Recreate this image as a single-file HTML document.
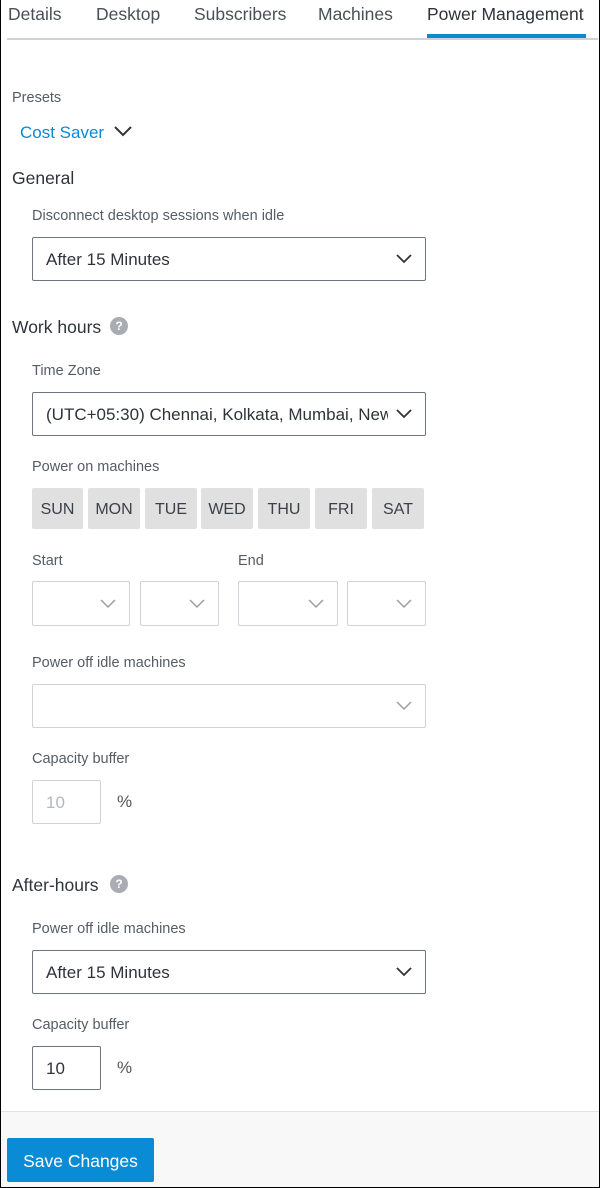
<!DOCTYPE html>
<html><head><meta charset="utf-8"><style>
*{box-sizing:border-box;margin:0;padding:0}
body{width:600px;height:1188px;position:relative;background:#fff;font-family:"Liberation Sans",sans-serif;color:#333;overflow:hidden}
.a{position:absolute;white-space:nowrap}
.frame{position:absolute;left:0;top:0;width:600px;height:1188px;border:1px solid #000;border-top:none;pointer-events:none}
.tab{position:absolute;top:4px;font-size:17.5px;color:#4a4f57;white-space:nowrap}
.lbl{font-size:14.5px;color:#555c66}
.h{font-size:17.5px;color:#2f333a}
.sel{position:absolute;border:1px solid #6f7580;border-radius:2px;background:#fff;font-size:17px;color:#2f333a;padding-left:13px;display:flex;align-items:center;white-space:nowrap}
.sel.l{border-color:#cfd2d6}
.chev{position:absolute;right:13px;top:50%;margin-top:-5px}
.day{position:absolute;top:488px;height:41px;background:#e0e0e0;border-radius:2px;font-size:16px;color:#3b4048;display:flex;align-items:center;justify-content:center;padding-top:2px}
.q{position:absolute;width:18px;height:18px;border-radius:50%;background:#a9adb3;color:#fff;font-size:12px;font-weight:bold;text-align:center;line-height:18px}
</style></head><body>
<div class="tab" style="left:8px">Details</div>
<div class="tab" style="left:96px">Desktop</div>
<div class="tab" style="left:194px">Subscribers</div>
<div class="tab" style="left:318px">Machines</div>
<div class="tab" style="left:427px;color:#2f333a">Power Management</div>
<div class="a" style="left:7px;top:38px;width:591px;height:2px;background:#d0d2d5"></div>
<div class="a" style="left:427px;top:34px;width:159px;height:4px;background:#0a8ad0"></div>

<div class="a lbl" style="left:12px;top:90px">Presets</div>
<div class="a" style="left:20px;top:123px;font-size:17px;color:#0a8ad0">Cost Saver</div>
<svg class="a" style="left:114px;top:126px" width="18" height="11"><path d="M1 1 L9 9 L17 1" stroke="#333" stroke-width="2" fill="none"/></svg>

<div class="a h" style="left:12px;top:168px">General</div>
<div class="a lbl" style="left:32px;top:208px">Disconnect desktop sessions when idle</div>
<div class="sel" style="left:32px;top:237px;width:394px;height:44px;padding-top:2px">After 15 Minutes<svg class="chev" width="16" height="10"><path d="M1 1 L8 8 L15 1" stroke="#333" stroke-width="1.8" fill="none"/></svg></div>

<div class="a h" style="left:12px;top:317px">Work hours</div>
<div class="q" style="left:110px;top:317px">?</div>
<div class="a lbl" style="left:32px;top:363px">Time Zone</div>
<div class="sel" style="left:32px;top:392px;width:394px;height:44px;overflow:hidden;padding-top:2px"><span style="width:342px;overflow:hidden;display:block">(UTC+05:30) Chennai, Kolkata, Mumbai, New Delhi</span><svg class="chev" width="16" height="10"><path d="M1 1 L8 8 L15 1" stroke="#333" stroke-width="1.8" fill="none"/></svg></div>

<div class="a lbl" style="left:32px;top:459px">Power on machines</div>
<div class="day" style="left:32px;width:51px">SUN</div>
<div class="day" style="left:88px;width:52px">MON</div>
<div class="day" style="left:145px;width:52px">TUE</div>
<div class="day" style="left:201px;width:52px">WED</div>
<div class="day" style="left:258px;width:52px">THU</div>
<div class="day" style="left:315px;width:52px">FRI</div>
<div class="day" style="left:372px;width:52px">SAT</div>

<div class="a lbl" style="left:32px;top:553px">Start</div>
<div class="a lbl" style="left:238px;top:553px">End</div>
<div class="sel l" style="left:32px;top:581px;width:98px;height:45px"><svg class="chev" width="16" height="10"><path d="M1 1 L8 8 L15 1" stroke="#9a9ea5" stroke-width="1.5" fill="none"/></svg></div>
<div class="sel l" style="left:140px;top:581px;width:79px;height:45px"><svg class="chev" width="16" height="10"><path d="M1 1 L8 8 L15 1" stroke="#9a9ea5" stroke-width="1.5" fill="none"/></svg></div>
<div class="sel l" style="left:238px;top:581px;width:100px;height:45px"><svg class="chev" width="16" height="10"><path d="M1 1 L8 8 L15 1" stroke="#9a9ea5" stroke-width="1.5" fill="none"/></svg></div>
<div class="sel l" style="left:347px;top:581px;width:79px;height:45px"><svg class="chev" width="16" height="10"><path d="M1 1 L8 8 L15 1" stroke="#9a9ea5" stroke-width="1.5" fill="none"/></svg></div>

<div class="a lbl" style="left:32px;top:655px">Power off idle machines</div>
<div class="sel l" style="left:32px;top:684px;width:394px;height:44px"><svg class="chev" width="16" height="10"><path d="M1 1 L8 8 L15 1" stroke="#9a9ea5" stroke-width="1.5" fill="none"/></svg></div>
<div class="a lbl" style="left:32px;top:751px">Capacity buffer</div>
<div class="sel l" style="left:32px;top:780px;width:69px;height:44px;color:#b5b8bd;padding-top:2px">10</div>
<div class="a" style="left:117px;top:792px;font-size:17px;color:#555">%</div>

<div class="a h" style="left:12px;top:875px">After-hours</div>
<div class="q" style="left:110px;top:875px">?</div>
<div class="a lbl" style="left:32px;top:921px">Power off idle machines</div>
<div class="sel" style="left:32px;top:950px;width:394px;height:44px;padding-top:2px">After 15 Minutes<svg class="chev" width="16" height="10"><path d="M1 1 L8 8 L15 1" stroke="#333" stroke-width="1.8" fill="none"/></svg></div>
<div class="a lbl" style="left:32px;top:1017px">Capacity buffer</div>
<div class="sel" style="left:32px;top:1046px;width:69px;height:44px;padding-top:2px">10</div>
<div class="a" style="left:117px;top:1058px;font-size:17px;color:#555">%</div>

<div class="a" style="left:0;top:1111px;width:600px;height:77px;background:#f8f8f8;border-top:1px solid #e2e2e2"></div>
<div class="a" style="left:7px;top:1138px;width:147px;height:44px;background:#0a8bd6;border-radius:2px;color:#fff;font-size:17.5px;display:flex;align-items:center;justify-content:center;padding-top:2px">Save Changes</div>
<div class="frame"></div>
</body></html>
